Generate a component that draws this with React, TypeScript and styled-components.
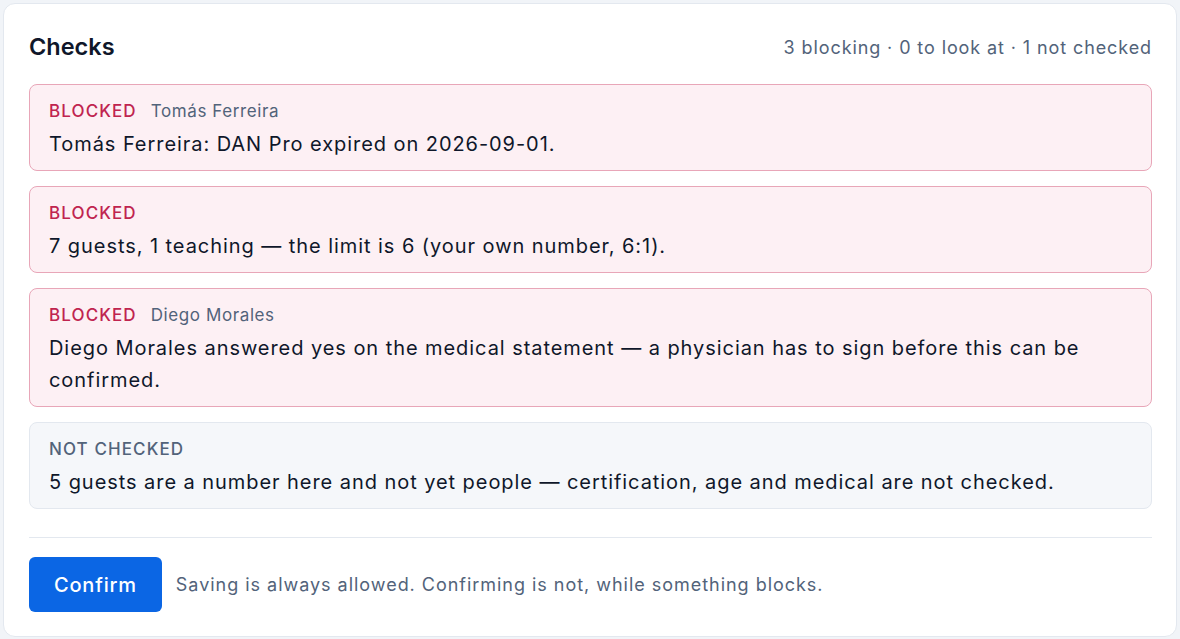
import styled, { createGlobalStyle } from "styled-components";

type Tone = "blocked" | "unchecked";

interface Check {
  id: number;
  tone: Tone;
  person?: string;
  text: string;
}

const checks: Check[] = [
  {
    id: 1,
    tone: "blocked",
    person: "Tomás Ferreira",
    text: "Tomás Ferreira: DAN Pro expired on 2026-09-01.",
  },
  {
    id: 2,
    tone: "blocked",
    text: "7 guests, 1 teaching — the limit is 6 (your own number, 6:1).",
  },
  {
    id: 3,
    tone: "blocked",
    person: "Diego Morales",
    text: "Diego Morales answered yes on the medical statement — a physician has to sign before this can be confirmed.",
  },
  {
    id: 4,
    tone: "unchecked",
    text: "5 guests are a number here and not yet people — certification, age and medical are not checked.",
  },
];

const toneLabel: Record<Tone, string> = {
  blocked: "Blocked",
  unchecked: "Not checked",
};

export default function App() {
  return (
    <>
      <GlobalStyle />
      <Card>
        <Header>
          <Title>Checks</Title>
          <Summary>3 blocking · 0 to look at · 1 not checked</Summary>
        </Header>

        <List>
          {checks.map((check) => (
            <Item key={check.id} tone={check.tone}>
              <Meta>
                <Label tone={check.tone}>{toneLabel[check.tone]}</Label>
                {check.person && <Person>{check.person}</Person>}
              </Meta>
              <Body>{check.text}</Body>
            </Item>
          ))}
        </List>

        <Divider />

        <Footer>
          <ConfirmButton>Confirm</ConfirmButton>
          <Note>Saving is always allowed. Confirming is not, while something blocks.</Note>
        </Footer>
      </Card>
    </>
  );
}

const GlobalStyle = createGlobalStyle`
  html, body {
    margin: 0;
    padding: 0;
    background: #f1f4f8;
    font-family: Inter, "Noto Sans", "Liberation Sans", sans-serif;
    color: #0f172a;
  }
  body {
    padding: 3px 3px 2px 3px;
  }
`;

const Card = styled.section`
  display: flex;
  flex-direction: column;
  background: #ffffff;
  border: 1px solid #e3e8ef;
  border-radius: 12px;
  padding: 28px 24px 24px 25px;
  min-height: 634px;
  box-sizing: border-box;
`;

const Header = styled.header`
  display: flex;
  align-items: center;
  justify-content: space-between;
  height: 28px;
  margin-bottom: 24px;
`;

const Title = styled.h2`
  margin: 0;
  font-size: 23.5px;
  font-weight: 600;
  color: #0f172a;
`;

const Summary = styled.span`
  font-size: 18px;
  letter-spacing: 0.05em;
  color: #52637a;
  padding-top: 2px;
`;

const List = styled.div`
  display: flex;
  flex-direction: column;
  gap: 15px;
`;

const Item = styled.div<{ tone: Tone }>`
  display: flex;
  flex-direction: column;
  gap: 6px;
  padding: 15px 19px 10px;
  border-radius: 8px;
  border: 1px solid ${(p) => (p.tone === "blocked" ? "#e8a6b8" : "#e3e8ef")};
  background: ${(p) => (p.tone === "blocked" ? "#fdf0f4" : "#f5f7fa")};
`;

const Meta = styled.div`
  display: flex;
  align-items: baseline;
  gap: 14px;
  line-height: 22px;
`;

const Label = styled.span<{ tone: Tone }>`
  font-size: 17px;
  font-weight: 500;
  text-transform: uppercase;
  letter-spacing: 0.065em;
  color: ${(p) => (p.tone === "blocked" ? "#c0244f" : "#52637a")};
`;

const Person = styled.span`
  font-size: 17px;
  letter-spacing: 0.035em;
  color: #52637a;
`;

const Body = styled.p`
  margin: 0;
  font-size: 20px;
  line-height: 32px;
  letter-spacing: 0.047em;
  color: #0f172a;
`;

const Divider = styled.hr`
  border: none;
  border-top: 1px solid #e3e8ef;
  margin: 28px 0 19px;
`;

const Footer = styled.div`
  display: flex;
  align-items: center;
  gap: 14px;
`;

const ConfirmButton = styled.button`
  height: 55px;
  padding: 0 25px;
  border: none;
  border-radius: 6px;
  background: #0b66e4;
  color: #ffffff;
  font-family: inherit;
  font-size: 20px;
  font-weight: 500;
  letter-spacing: 0.04em;
  cursor: pointer;
`;

const Note = styled.span`
  font-size: 18px;
  letter-spacing: 0.054em;
  color: #52637a;
`;
